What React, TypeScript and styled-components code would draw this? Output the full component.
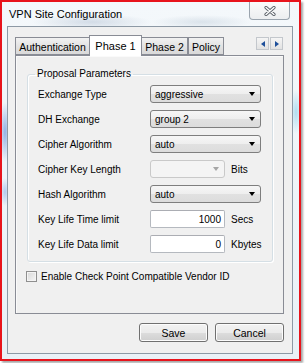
import styled, { createGlobalStyle } from 'styled-components';

const Global = createGlobalStyle`
  html, body {
    margin: 0;
    padding: 0;
    background: #ffffff;
  }
  body {
    font-family: "Liberation Sans", Arial, sans-serif;
    font-size: 10px;
    color: #000;
  }
`;

const Page = styled.div`
  width: 305px;
  height: 363px;
  overflow: hidden;
`;

const Frame = styled.div`
  width: 301px;
  height: 361px;
  box-sizing: border-box;
  border: 2px solid #e8141c;
  box-shadow: 2px 2px 2px rgba(0, 0, 0, 0.35);
  display: flex;
  flex-direction: column;
  padding: 0 6px 5px 5px;
  background:
    radial-gradient(ellipse 6px 30px at 3px 130px, rgba(70, 120, 210, 0.55), transparent),
    radial-gradient(ellipse 5px 14px at 3px 190px, rgba(90, 140, 220, 0.4), transparent),
    radial-gradient(ellipse 6px 22px at 294px 110px, rgba(150, 210, 235, 0.7), transparent),
    radial-gradient(ellipse 60px 8px at 90px 20px, rgba(170, 185, 205, 0.45), transparent),
    radial-gradient(ellipse 50px 7px at 200px 20px, rgba(180, 195, 210, 0.4), transparent),
    linear-gradient(#f4f8fb, #e9f1f7);
`;

const TitleBar = styled.div`
  height: 24px;
  display: flex;
  align-items: flex-start;
  justify-content: space-between;
`;

const Title = styled.span`
  font-size: 11px;
  line-height: 11px;
  margin: 7px 0 0 2px;
  color: #000;
`;

const CloseButton = styled.div`
  width: 41px;
  height: 18px;
  margin-right: 3px;
  box-sizing: border-box;
  border: 1px solid #9aa4ae;
  border-top: none;
  border-radius: 0 0 4px 4px;
  background: linear-gradient(#fbfbfb, #eceef0);
  display: flex;
  align-items: center;
  justify-content: center;
`;

const Client = styled.div`
  flex: 1;
  box-sizing: border-box;
  border: 1px solid #8d99a5;
  background: #f0f0f0;
  padding: 9px 8px 11px 7px;
  display: flex;
  flex-direction: column;
`;

const TabStrip = styled.div`
  height: 19px;
  display: flex;
  align-items: flex-end;
  position: relative;
  z-index: 1;
`;

const Tab = styled.div<{ $active?: boolean; $w: number }>`
  width: ${(p) => p.$w}px;
  height: ${(p) => (p.$active ? 21 : 18)}px;
  box-sizing: border-box;
  margin-bottom: ${(p) => (p.$active ? -1 : 0)}px;
  margin-left: ${(p) => (p.$active ? -1 : 0)}px;
  margin-right: ${(p) => (p.$active ? -1 : 0)}px;
  border: 1px solid #898c95;
  border-bottom: ${(p) => (p.$active ? 'none' : '1px solid #898c95')};
  background: ${(p) => (p.$active ? '#ffffff' : 'linear-gradient(#f2f2f2, #e3e3e3 50%, #d9d9d9)')};
  font-size: ${(p) => (p.$active ? 11 : 10.5)}px;
  display: flex;
  align-items: center;
  justify-content: center;
  padding-top: ${(p) => (p.$active ? 0 : 1)}px;
  position: relative;
  z-index: ${(p) => (p.$active ? 2 : 1)};
`;

const SpinGroup = styled.div`
  margin-left: auto;
  margin-right: 1px;
  margin-bottom: 5px;
  display: flex;
  gap: 1px;
`;

const SpinButton = styled.div`
  width: 13px;
  height: 13px;
  box-sizing: border-box;
  border: 1px solid #c3c7cc;
  background: linear-gradient(#f5f5f5, #e2e2e2);
  display: flex;
  align-items: center;
  justify-content: center;
`;

const Panel = styled.div`
  height: 259px;
  box-sizing: border-box;
  border: 1px solid #898c95;
  background: #f0f0f0;
  box-shadow: inset 1px 1px 0 #fafafa;
  padding: 12px 10px 0 11px;
  display: flex;
  flex-direction: column;
`;

const Group = styled.fieldset`
  margin: 0;
  width: 245px;
  box-sizing: border-box;
  border: 1px solid #d5dfe5;
  border-radius: 3px;
  box-shadow: inset 1px 1px 0 #ffffff, 1px 1px 0 #ffffff;
  padding: 5px 10px 8px 10px;
  display: flex;
  flex-direction: column;
  gap: 7px;
`;

const Legend = styled.legend`
  padding: 0 2px;
  margin-left: -3px;
  font-size: 10px;
  line-height: 12px;
`;

const Row = styled.div`
  height: 18px;
  display: flex;
  align-items: center;
`;

const Label = styled.span`
  width: 112px;
  font-size: 10px;
`;

const Combo = styled.div<{ $w: number; $disabled?: boolean }>`
  width: ${(p) => p.$w}px;
  height: 18px;
  box-sizing: border-box;
  border: 1px solid ${(p) => (p.$disabled ? '#c9c9c9' : '#7e7e7e')};
  border-radius: 3px;
  background: ${(p) =>
    p.$disabled ? '#f4f4f4' : 'linear-gradient(#f6f6f6, #eeeeee 50%, #e1e1e1 51%, #dcdcdc)'};
  display: flex;
  align-items: center;
  padding: 0 4px 0 4px;
  font-size: 10px;
`;

const ComboText = styled.span`
  flex: 1;
`;

const Arrow = styled.span<{ $disabled?: boolean }>`
  width: 0;
  height: 0;
  border-left: 3.5px solid transparent;
  border-right: 3.5px solid transparent;
  border-top: 4px solid ${(p) => (p.$disabled ? '#a5a5a5' : '#000')};
  margin-right: 1px;
`;

const Input = styled.div`
  width: 75px;
  height: 18px;
  box-sizing: border-box;
  border: 1px solid #b5b9bf;
  border-top-color: #abadb3;
  border-radius: 2px;
  background: #ffffff;
  display: flex;
  align-items: center;
  justify-content: flex-end;
  padding-right: 3px;
  font-size: 10px;
`;

const Unit = styled.span`
  margin-left: 6px;
  font-size: 10px;
`;

const CheckRow = styled.div`
  margin: 9px 0 0 -1px;
  display: flex;
  align-items: center;
  gap: 4px;
  font-size: 10px;
`;

const CheckBox = styled.span`
  width: 11px;
  height: 11px;
  box-sizing: border-box;
  border: 1px solid #8f8f8f;
  background: linear-gradient(135deg, #d8d8d8, #f6f6f6);
  box-shadow: inset 0 0 0 1px #f4f4f4;
`;

const Buttons = styled.div`
  margin-top: 9px;
  display: flex;
  justify-content: flex-end;
  gap: 7px;
`;

const Button = styled.div`
  width: 69px;
  height: 19px;
  box-sizing: border-box;
  border: 1px solid #707070;
  border-radius: 3px;
  background: linear-gradient(#f2f2f2, #ebebeb 50%, #dddddd 51%, #cfcfcf);
  box-shadow: inset 0 0 0 1px #fcfcfc;
  display: flex;
  align-items: center;
  justify-content: center;
  font-size: 10.5px;
`;

const combos = [
  { label: 'Exchange Type', value: 'aggressive' },
  { label: 'DH Exchange', value: 'group 2' },
  { label: 'Cipher Algorithm', value: 'auto' },
];

export default function App() {
  return (
    <Page>
      <Global />
      <Frame>
        <TitleBar>
          <Title>VPN Site Configuration</Title>
          <CloseButton>
            <svg width="12" height="10" viewBox="0 0 12 10">
              <path d="M2 1.5 L10 8.5 M10 1.5 L2 8.5" stroke="#5a6068" strokeWidth="3.2" strokeLinecap="round" />
              <path d="M2 1.5 L10 8.5 M10 1.5 L2 8.5" stroke="#ffffff" strokeWidth="1.4" strokeLinecap="round" />
            </svg>
          </CloseButton>
        </TitleBar>
        <Client>
          <TabStrip>
            <Tab $w={75}>Authentication</Tab>
            <Tab $w={53} $active>Phase 1</Tab>
            <Tab $w={47}>Phase 2</Tab>
            <Tab $w={36}>Policy</Tab>
            <SpinGroup>
              <SpinButton>
                <svg width="4" height="6" viewBox="0 0 4 6">
                  <path d="M4 0 L0 3 L4 6 Z" fill="#1e4f9a" />
                </svg>
              </SpinButton>
              <SpinButton>
                <svg width="4" height="6" viewBox="0 0 4 6">
                  <path d="M0 0 L4 3 L0 6 Z" fill="#1e4f9a" />
                </svg>
              </SpinButton>
            </SpinGroup>
          </TabStrip>
          <Panel>
            <Group>
              <Legend>Proposal Parameters</Legend>
              {combos.map((c) => (
                <Row key={c.label}>
                  <Label>{c.label}</Label>
                  <Combo $w={111}>
                    <ComboText>{c.value}</ComboText>
                    <Arrow />
                  </Combo>
                </Row>
              ))}
              <Row>
                <Label>Cipher Key Length</Label>
                <Combo $w={75} $disabled>
                  <ComboText />
                  <Arrow $disabled />
                </Combo>
                <Unit>Bits</Unit>
              </Row>
              <Row>
                <Label>Hash Algorithm</Label>
                <Combo $w={111}>
                  <ComboText>auto</ComboText>
                  <Arrow />
                </Combo>
              </Row>
              <Row>
                <Label>Key Life Time limit</Label>
                <Input>1000</Input>
                <Unit>Secs</Unit>
              </Row>
              <Row>
                <Label>Key Life Data limit</Label>
                <Input>0</Input>
                <Unit>Kbytes</Unit>
              </Row>
            </Group>
            <CheckRow>
              <CheckBox />
              Enable Check Point Compatible Vendor ID
            </CheckRow>
          </Panel>
          <Buttons>
            <Button>Save</Button>
            <Button>Cancel</Button>
          </Buttons>
        </Client>
      </Frame>
    </Page>
  );
}
